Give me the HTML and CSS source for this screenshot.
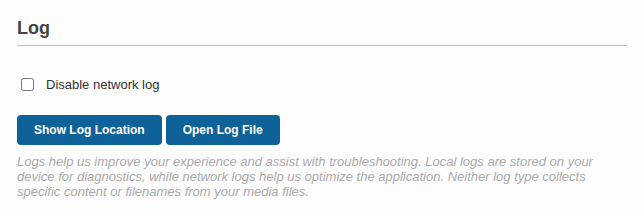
FILE: index.html
```html
<!DOCTYPE html>
<html lang="en">
<head>
    <meta charset="UTF-8">
    <meta name="viewport" content="width=device-width, initial-scale=1.0">
    <title>Log</title>
    <link rel="stylesheet" href="styles.css">
</head>
<body>
    <div class="section">
        <h2 class="section-title">Log</h2>

        <label class="check-row">
            <input type="checkbox" id="disableNetworkLog">
            <span>Disable network log</span>
        </label>

        <div class="actions">
            <button class="btn">Show Log Location</button>
            <button class="btn">Open Log File</button>
        </div>

        <p class="note">Logs help us improve your experience and assist with troubleshooting. Local logs are stored on your device for diagnostics, while network logs help us optimize the application. Neither log type collects specific content or filenames from your media files.</p>
    </div>
</body>
</html>
```

FILE: styles.css
```css
*, *::before, *::after{
    margin: 0;
    padding: 0;
    box-sizing: border-box;
}

body{
    background-color: #fdfdfd;
    font-family: "Liberation Sans", Arial, sans-serif;
    color: #333;
}

.section{
    width: 610px;
    margin-left: 17px;
    padding-top: 17px;
}
.section-title{
    font-size: 18px;
    font-weight: bold;
    color: #444;
    line-height: 22px;
    padding-bottom: 6px;
    border-bottom: 1px solid #bbb;
}
.check-row{
    display: flex;
    align-items: center;
    margin-top: 31px;
    font-size: 13px;
    color: #333;
}
.check-row input{
    width: 13px;
    height: 13px;
    margin: 0 12px 0 4px;
}
.actions{
    display: flex;
    gap: 4px;
    margin-top: 23px;
}
.btn{
    border: 0;
    outline: 0;
    height: 30px;
    padding: 0 17px;
    border-radius: 4px;
    background-color: #0f6199;
    color: white;
    font-family: "Liberation Sans", Arial, sans-serif;
    font-size: 12px;
    font-weight: bold;
}
.note{
    margin-top: 9px;
    font-size: 13px;
    line-height: 15px;
    font-style: italic;
    color: #aaa;
}
```
